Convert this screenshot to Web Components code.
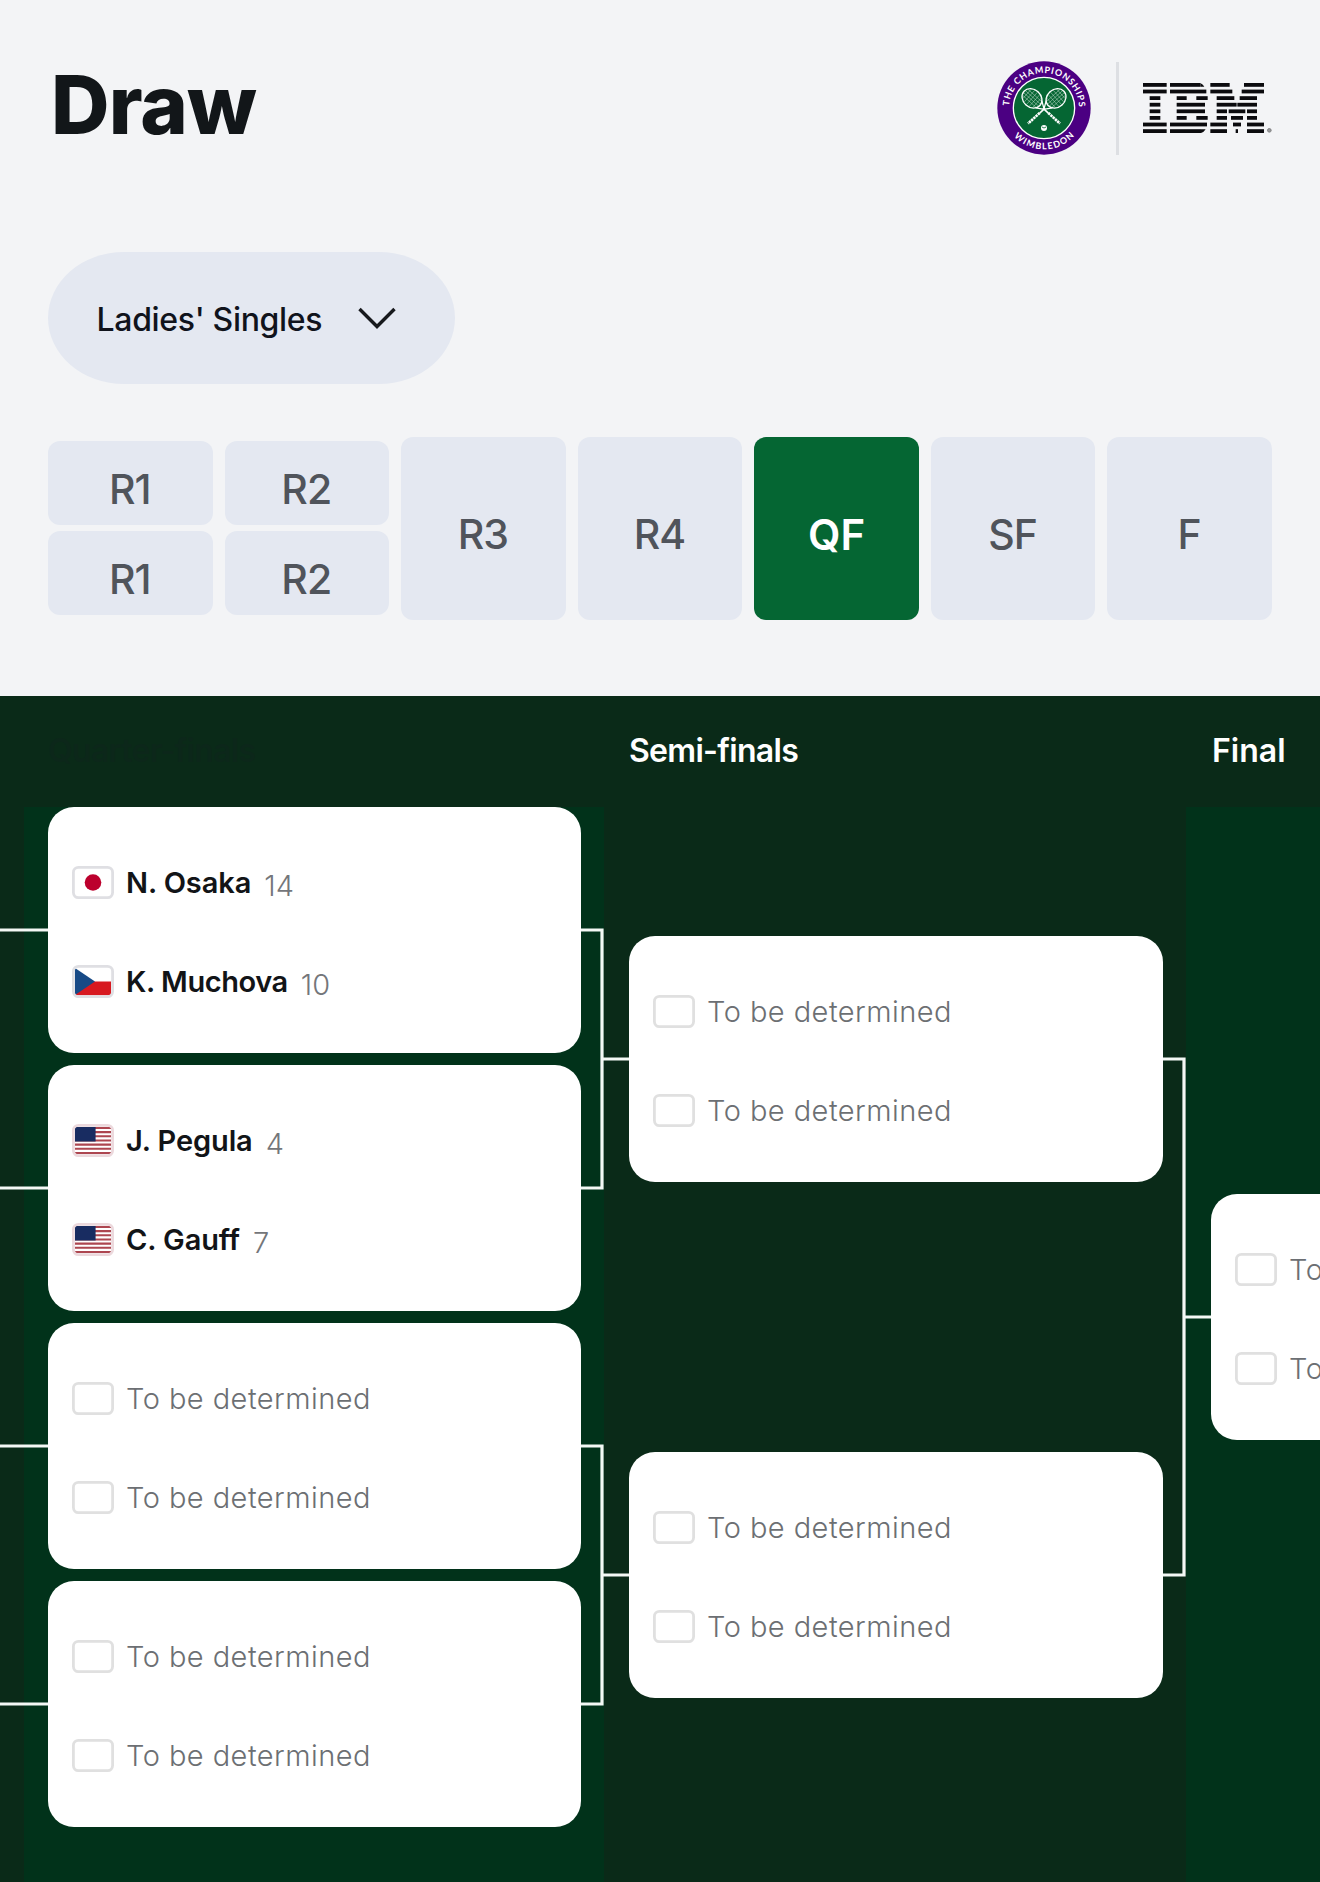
<!DOCTYPE html>
<html lang="en">
<head>
<meta charset="utf-8">
<title>Draw</title>
<style>
  body {
    margin: 0;
    background: #f3f4f6;
    font-family: Inter, "Open Sans", sans-serif;
    color: #121619;
  }
</style>
</head>
<body>
<draw-page></draw-page>

<script>
class WimbledonLogo extends HTMLElement {
  constructor() {
    super();
    this.attachShadow({ mode: "open" });
    this.shadowRoot.innerHTML = `
      <style>
        :host { display: block; width: 94px; height: 94px; }
        svg { display: block; }
        text { font: 700 27px Lato, sans-serif; fill: #fff; }
      </style>
      <svg width="94" height="94" viewBox="-141 -141 282 282">
        <defs>
          <path id="top" d="M-105 0A105 105 0 0 1 105 0"/>
          <path id="bottom" d="M-124 0A124 124 0 0 0 124 0"/>
          <g id="racket" fill="none" stroke="#fff">
            <g transform="translate(-36 -29) rotate(42)">
              <ellipse rx="32" ry="27" stroke-width="4"/>
              <path stroke-width="1.3" stroke="#d5e8dc" d="M-20 -20V20M-10 -25V25M0 -27V27M10 -25V25M20 -20V20M-28 -12H28M-31 -4H31M-31 4H31M-28 12H28"/>
              <path stroke-width="4" d="M27 -14L46 -2M27 14L46 2"/>
              <path stroke-width="5" d="M44 0H66"/>
              <path stroke-width="8" d="M66 0H113" stroke-dasharray="7 2"/>
            </g>
          </g>
        </defs>
        <circle r="140" fill="#4b0082"/>
        <circle r="92" fill="#056633" stroke="#fff" stroke-width="4"/>
        <use href="#racket"/>
        <use href="#racket" transform="scale(-1 1)"/>
        <circle cy="60" r="9" fill="#fff"/>
        <path d="M-6 57Q0 63 6 57" fill="none" stroke="#056633" stroke-width="2.5"/>
        <text><textPath href="#top" startOffset="6" textLength="320">THE CHAMPIONSHIPS</textPath></text>
        <text><textPath href="#bottom" startOffset="94" textLength="203">WIMBLEDON</textPath></text>
      </svg>
    `;
  }
}

class IbmLogo extends HTMLElement {
  constructor() {
    super();
    this.attachShadow({ mode: "open" });
    // each row lists the start and end of the bars on that line
    const rows = [
      [0, 71, 81, 172, 202, 260, 303, 363],
      [0, 71, 81, 190, 202, 268, 296, 363],
      [20, 52, 101, 131, 160, 194, 221, 274, 290, 342],
      [20, 52, 101, 186, 221, 281, 283, 342],
      [20, 52, 101, 186, 221, 252, 257, 307, 312, 342],
      [20, 52, 101, 131, 160, 194, 221, 252, 264, 300, 312, 342],
      [0, 71, 81, 192, 202, 252, 270, 294, 312, 363],
      [0, 71, 81, 174, 202, 252, 278, 285, 312, 363]
    ];
    const bars = rows.map((row, i) => {
      let out = "";
      for (let j = 0; j < row.length; j += 2) {
        out += `<rect x="${row[j]}" y="${i * 19.8}" width="${row[j + 1] - row[j]}" height="11.4"/>`;
      }
      return out;
    }).join("");
    this.shadowRoot.innerHTML = `
      <style>
        :host { display: block; width: 129px; height: 50px; }
        svg { display: block; }
      </style>
      <svg width="129" height="50" viewBox="0 0 387 150" fill="#0b0b0e">
        ${bars}
        <path d="M172 0q9 5 12 11.4h-12zM174 138.6h14q-5 8-14 11.4z"/>
        <circle cx="379" cy="142" r="5.5" fill="#9a9b9d" stroke="#77787a" stroke-width="2.5"/>
      </svg>
    `;
  }
}

class DrawSelect extends HTMLElement {
  constructor() {
    super();
    this.attachShadow({ mode: "open" });
    this.shadowRoot.innerHTML = `
      <style>
        :host {
          display: flex;
          align-items: center;
          box-sizing: border-box;
          width: 407px;
          height: 132px;
          padding: 2px 59px 0 48.5px;
          border-radius: 76px / 66px;
          background: #e4e8f1;
          justify-content: space-between;
          font-size: 32px;
          font-weight: 540;
          letter-spacing: -0.32px;
          color: #10131c;
        }
      </style>
      <slot></slot>
      <svg width="38" height="24" viewBox="0 0 38 24" fill="none" stroke="#17191d" stroke-width="3.4">
        <path d="M1.5 2L19 19.5L36.5 2"/>
      </svg>
    `;
  }
}

class RoundTab extends HTMLElement {
  constructor() {
    super();
    this.attachShadow({ mode: "open" });
    this.shadowRoot.innerHTML = `
      <style>
        :host {
          display: flex;
          align-items: center;
          justify-content: center;
          box-sizing: border-box;
          height: 183px;
          padding: 11px 1px 0 0;
          border-radius: 12px;
          background: #e4e8f1;
          color: #50545b;
          font-size: 41px;
          font-weight: 550;
          letter-spacing: -0.9px;
        }
        :host([small]) { height: 84px; }
        :host([active]) {
          padding-right: 0;
          background: #056633;
          color: #fff;
          font-size: 42px;
          font-weight: 640;
          letter-spacing: 0;
        }
      </style>
      <slot></slot>
    `;
  }
}

const FLAGS = {
  jp: `<circle cx="21" cy="16.5" r="8.3" fill="#bc002d"/>`,
  cz: `<path fill="#d71920" d="M3 16.5h36v14H3z"/><path fill="#174a86" d="M3 3l20 13.5L3 30z"/>`,
  us: `<path stroke="#ad4650" stroke-width="2.08" d="M3 4h36M3 8.16h36M3 12.32h36M3 16.48h36M3 20.64h36M3 24.8h36M3 28.96h36"/>
       <path fill="#182c61" d="M3 3h20.6v14.5H3z"/>`
};

class DrawFlag extends HTMLElement {
  constructor() {
    super();
    this.attachShadow({ mode: "open" });
    const code = this.getAttribute("code");
    const edge = code === "us" ? "#ecd9dd" : code ? "#dfdfe3" : "#e0e0e0";
    this.shadowRoot.innerHTML = `
      <style>
        :host { display: block; width: 42px; height: 33px; }
        svg { display: block; }
      </style>
      <svg width="42" height="33" viewBox="0 0 42 33">
        <defs><clipPath id="c"><rect x="2.5" y="2.5" width="37" height="28" rx="3.5"/></clipPath></defs>
        <g clip-path="url(#c)">${FLAGS[code] || ""}</g>
        <rect x="1.4" y="1.4" width="39.2" height="30.2" rx="5" fill="none" stroke="${edge}" stroke-width="2.8"/>
      </svg>
    `;
  }
}

class DrawPlayer extends HTMLElement {
  constructor() {
    super();
    this.attachShadow({ mode: "open" });
    const flag = this.getAttribute("flag");
    const seed = this.getAttribute("seed");
    this.shadowRoot.innerHTML = `
      <style>
        :host {
          display: flex;
          align-items: center;
          height: 33px;
          white-space: nowrap;
          font-size: 29px;
          line-height: 33px;
          letter-spacing: -0.1px;
        }
        .name { margin-left: 12px; }
        .known { font-weight: 600; color: #121417; }
        .tbd { font-weight: 350; color: #6c6f73; letter-spacing: 0.46px; }
        .seed { margin: 6px 0 0 13px; font-weight: 350; color: #74767a; letter-spacing: 0; }
      </style>
      <draw-flag ${flag ? `code="${flag}"` : ""}></draw-flag>
      <span class="name ${flag ? "known" : "tbd"}"><slot>To be determined</slot></span>
      ${seed ? `<span class="seed">${seed}</span>` : ""}
    `;
  }
}

class DrawMatch extends HTMLElement {
  constructor() {
    super();
    this.attachShadow({ mode: "open" });
    this.shadowRoot.innerHTML = `
      <style>
        :host {
          display: flex;
          flex-direction: column;
          gap: 66px;
          box-sizing: border-box;
          height: 246px;
          padding: 59px 24px 0;
          border-radius: 26px;
          background: #fff;
          overflow: hidden;
        }
      </style>
      <slot>
        <draw-player></draw-player>
        <draw-player></draw-player>
      </slot>
    `;
  }
}

class BracketLines extends HTMLElement {
  constructor() {
    super();
    this.attachShadow({ mode: "open" });
    this.shadowRoot.innerHTML = `
      <style>
        :host { display: block; width: 48px; height: 1075px; }
        svg { display: block; }
      </style>
      <svg width="48" height="1075" viewBox="0 0 48 1075" fill="none" stroke="#f4f8f5" stroke-width="3.2">
        <path d="${this.getAttribute("path")}"/>
      </svg>
    `;
  }
}

class DrawBracket extends HTMLElement {
  constructor() {
    super();
    this.attachShadow({ mode: "open" });
    this.shadowRoot.innerHTML = `
      <style>
        :host { display: block; height: 1186px; background: #0a2a18; overflow: hidden; }
        .titles, .rounds {
          display: grid;
          grid-template-columns: 48px 533px 48px 534px 48px 109px;
        }
        .titles {
          box-sizing: border-box;
          height: 111px;
          padding-bottom: 2px;
          align-items: center;
          font-size: 32px;
          font-weight: 580;
          color: #fff;
          white-space: nowrap;
        }
        h2 { margin: 0; font: inherit; }
        .past { grid-column: 2; color: #0c271a; letter-spacing: -0.7px; }
        .semi { grid-column: 4; letter-spacing: -0.7px; }
        .final { grid-column: 6; padding-left: 1px; }
        .rounds {
          height: 1075px;
          background: linear-gradient(90deg,
            #0a2a18 24px, #01321a 24px 604px,
            #0a2a18 604px 1186px, #01321a 1186px);
        }
        .round { display: flex; flex-direction: column; gap: 12px; }
        .sf { padding-top: 129px; gap: 270px; }
        .f { padding-top: 387px; width: 534px; }
      </style>
      <div class="titles">
        <h2 class="past">Quarter-finals</h2>
        <h2 class="semi">Semi-finals</h2>
        <h2 class="final">Final</h2>
      </div>
      <div class="rounds">
        <bracket-lines path="M0 123H48M0 381H48M0 639H48M0 897H48"></bracket-lines>
        <div class="round">
          <draw-match>
            <draw-player flag="jp" seed="14">N. Osaka</draw-player>
            <draw-player flag="cz" seed="10" style="letter-spacing: -0.43px">K. Muchova</draw-player>
          </draw-match>
          <draw-match>
            <draw-player flag="us" seed="4">J. Pegula</draw-player>
            <draw-player flag="us" seed="7">C. Gauff</draw-player>
          </draw-match>
          <draw-match></draw-match>
          <draw-match></draw-match>
        </div>
        <bracket-lines path="M0 123H21V381H0M21 252H48M0 639H21V897H0M21 768H48"></bracket-lines>
        <div class="round sf">
          <draw-match></draw-match>
          <draw-match></draw-match>
        </div>
        <bracket-lines path="M0 252H21V768H0M21 510H48"></bracket-lines>
        <div class="round f">
          <draw-match></draw-match>
        </div>
      </div>
    `;
  }
}

class DrawPage extends HTMLElement {
  constructor() {
    super();
    this.attachShadow({ mode: "open" });
    this.shadowRoot.innerHTML = `
      <style>
        :host { display: block; width: 1320px; height: 1882px; overflow: hidden; }
        .top { box-sizing: border-box; height: 696px; padding: 61px 48px 0; }
        header { display: flex; align-items: flex-start; height: 191px; }
        h1 {
          margin: 0 auto 0 3px;
          font-size: 81px;
          font-weight: 780;
          line-height: 88px;
          letter-spacing: -0.9px;
        }
        .rule { width: 3px; height: 93px; margin: 1px 24px 0 25px; background: #dddfe3; }
        ibm-logo { margin-top: 22px; }
        nav {
          display: grid;
          grid-template-columns: repeat(7, 1fr);
          column-gap: 12px;
          margin-top: 53px;
          align-items: start;
        }
        .pair { display: flex; flex-direction: column; gap: 6px; margin-top: 4px; }
      </style>
      <div class="top">
        <header>
          <h1>Draw</h1>
          <wimbledon-logo></wimbledon-logo>
          <div class="rule"></div>
          <ibm-logo></ibm-logo>
        </header>
        <draw-select>Ladies' Singles</draw-select>
        <nav>
          <div class="pair">
            <round-tab small>R1</round-tab>
            <round-tab small>R1</round-tab>
          </div>
          <div class="pair">
            <round-tab small>R2</round-tab>
            <round-tab small>R2</round-tab>
          </div>
          <round-tab>R3</round-tab>
          <round-tab>R4</round-tab>
          <round-tab active>QF</round-tab>
          <round-tab>SF</round-tab>
          <round-tab>F</round-tab>
        </nav>
      </div>
      <draw-bracket></draw-bracket>
    `;
  }
}

customElements.define("wimbledon-logo", WimbledonLogo);
customElements.define("ibm-logo", IbmLogo);
customElements.define("draw-select", DrawSelect);
customElements.define("round-tab", RoundTab);
customElements.define("draw-flag", DrawFlag);
customElements.define("draw-player", DrawPlayer);
customElements.define("draw-match", DrawMatch);
customElements.define("bracket-lines", BracketLines);
customElements.define("draw-bracket", DrawBracket);
customElements.define("draw-page", DrawPage);
</script>
</body>
</html>
